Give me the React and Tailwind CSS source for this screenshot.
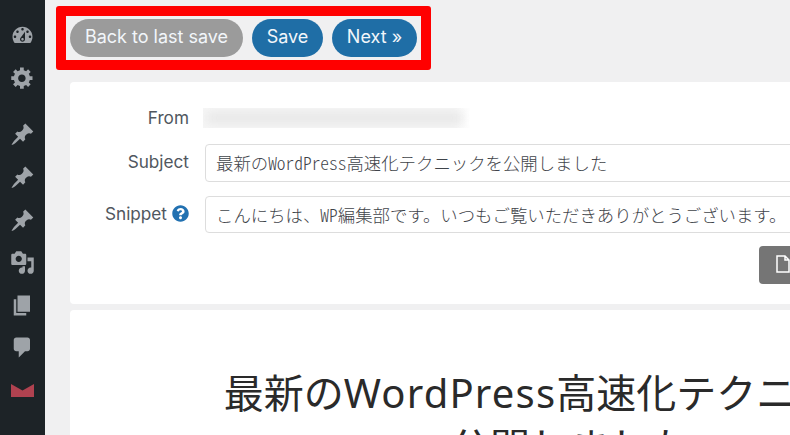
import React from "react";
import { FaQuestionCircle } from "react-icons/fa";

const icons = {
  dash: "M3.76 16h12.48c1.1-1.37 1.76-3.11 1.76-5 0-4.42-3.58-8-8-8s-8 3.58-8 8c0 1.89.66 3.63 1.76 5zM10 4c.55 0 1 .45 1 1s-.45 1-1 1-1-.45-1-1 .45-1 1-1zM6 6c.55 0 1 .45 1 1s-.45 1-1 1-1-.45-1-1 .45-1 1-1zm8 0c.55 0 1 .45 1 1s-.45 1-1 1-1-.45-1-1 .45-1 1-1zm-5.37 5.55L12 7v6c0 1.1-.9 2-2 2s-2-.9-2-2c0-.57.24-1.08.63-1.45zM4 10c.55 0 1 .45 1 1s-.45 1-1 1-1-.45-1-1 .45-1 1-1zm12 0c.55 0 1 .45 1 1s-.45 1-1 1-1-.45-1-1 .45-1 1-1zm-5 3c0-.55-.45-1-1-1s-1 .45-1 1 .45 1 1 1 1-.45 1-1z",
  gear: "M18 12h-2.18c-.17.7-.44 1.35-.81 1.93l1.54 1.54-2.1 2.1-1.54-1.54c-.58.36-1.23.63-1.91.79V19H8v-2.18c-.68-.16-1.33-.43-1.91-.79l-1.54 1.54-2.12-2.12 1.54-1.54c-.36-.58-.63-1.23-.79-1.91H1V9.03h2.17c.16-.7.44-1.35.8-1.94L2.43 5.55l2.1-2.1 1.54 1.54c.58-.37 1.24-.64 1.93-.81V2h3v2.18c.68.16 1.33.43 1.91.79l1.54-1.54 2.12 2.12-1.54 1.54c.36.59.64 1.24.8 1.94H18V12zm-8.5 1.5c1.66 0 3-1.34 3-3s-1.34-3-3-3-3 1.34-3 3 1.34 3 3 3z",
  pin: "M10.44 3.02l1.82-1.82 6.36 6.35-1.83 1.82c-1.05-.68-2.48-.57-3.41.36l-.75.75c-.92.93-1.04 2.35-.35 3.41l-1.83 1.82-2.41-2.41-2.8 2.79c-.42.42-3.38 2.71-3.8 2.29s1.86-3.39 2.28-3.81l2.79-2.79L4.1 9.36l1.83-1.82c1.05.69 2.48.57 3.4-.36l.75-.75c.93-.92 1.05-2.35.36-3.41z",
  media: "M13 11V4c0-.55-.45-1-1-1h-1.67L9 1H5L3.67 3H2c-.55 0-1 .45-1 1v7c0 .55.45 1 1 1h10c.55 0 1-.45 1-1zM7 4.5c1.38 0 2.5 1.12 2.5 2.5S8.38 9.5 7 9.5 4.5 8.38 4.5 7 5.62 4.5 7 4.5zM14 6h5v10.5c0 1.38-1.12 2.5-2.5 2.5S14 17.88 14 16.5s1.12-2.5 2.5-2.5c.17 0 .34.02.5.05V9h-3V6zm-4 8.05V13h2v3.5c0 1.38-1.12 2.5-2.5 2.5S7 17.88 7 16.5 8.12 14 9.5 14c.17 0 .34.02.5.05z",
  page: "M6 15V2h10v13H6zm-1 1h8v2H3V5h2v11z",
  comment: "M5 2h9c1.1 0 2 .9 2 2v7c0 1.1-.9 2-2 2h-2l-5 5v-5H5c-1.1 0-2-.9-2-2V4c0-1.1.9-2 2-2z",
};

function NavIcon({ d }) {
  return (
    <div className="flex h-[42.6px] items-center justify-center">
      <svg viewBox="0 0 20 20" className="h-[25px] w-[25px] fill-[#9ea3a8]">
        <path d={d} />
      </svg>
    </div>
  );
}

function Pill({ children, className }) {
  return (
    <button className={"flex h-[38px] items-center justify-center rounded-full pb-[3px] text-[18px] text-[#f2f6fa] " + className}>
      {children}
    </button>
  );
}

function FieldBox({ h, children }) {
  return (
    <div className={"flex items-center whitespace-nowrap rounded-[4px] border border-[#dddddd] bg-white pl-[10px] font-['Noto_Sans_CJK_JP',sans-serif] text-[17.4px] font-light text-[#3f444a] [font-feature-settings:'hwid'] " + h}>
      <span>{children}</span>
    </div>
  );
}

export default function App() {
  return (
    <div className="flex h-[435px] w-[790px] overflow-hidden bg-[#f0f0f1] font-['Inter',sans-serif]">
      <nav className="flex w-[45px] shrink-0 flex-col bg-[#1d2327] pt-[14px]">
        <NavIcon d={icons.dash} />
        <NavIcon d={icons.gear} />
        <div className="h-[14.5px]" />
        <NavIcon d={icons.pin} />
        <NavIcon d={icons.pin} />
        <NavIcon d={icons.pin} />
        <NavIcon d={icons.media} />
        <NavIcon d={icons.page} />
        <NavIcon d={icons.comment} />
        <div className="flex h-[42.6px] items-center justify-center">
          <svg viewBox="0 0 23 13" className="h-[13px] w-[23px] fill-[#b04250]">
            <path d="M0 0 L11.5 6.5 L23 0 V13 H0 Z" />
          </svg>
        </div>
      </nav>
      <main className="flex min-w-0 flex-1 flex-col">
        <div className="ml-[11px] mt-[6px] flex h-[64px] w-[375px] shrink-0 items-center gap-[9px] rounded-[3px] border-[10px] border-[#ff0000] px-[4px]">
          <Pill className="w-[173px] bg-[#9b9b9b]">Back to last save</Pill>
          <Pill className="w-[71px] bg-[#1f6ea6]">Save</Pill>
          <Pill className="w-[85px] bg-[#1f6ea6]">Next »</Pill>
        </div>
        <section className="ml-[25px] mt-[12px] h-[222px] w-[1000px] shrink-0 rounded-[4px] bg-white pt-[24px]">
          <div className="grid grid-cols-[119px_1fr] items-center gap-x-[16px] text-[17.2px] leading-[24px] text-[#50575e]">
            <div className="text-right">From</div>
            <div className="-ml-[2px] flex h-[20px] w-[267px] overflow-hidden bg-linear-to-r from-[#f6f6f6] via-[#f6f6f6] via-94% to-white p-[4px] pr-[8px]">
              <div className="flex-1 bg-[#e8e8e8] blur-[5px]" />
            </div>
            <div className="mt-[14px] -translate-y-[1px] text-right">Subject</div>
            <div className="mt-[14px]">
              <FieldBox h="h-[38px]">最新のWordPress高速化テクニックを公開しました</FieldBox>
            </div>
            <div className="mt-[14px] flex -translate-y-[1px] items-center justify-end gap-[5px]">
              Snippet <FaQuestionCircle className="h-[17px] w-[17px] text-[#2271b1]" />
            </div>
            <div className="mt-[14px]">
              <FieldBox h="h-[37px]">こんにちは、WP編集部です。いつもご覧いただきありがとうございます。</FieldBox>
            </div>
          </div>
          <div className="ml-[689px] mt-[13px] flex h-[38px] w-[100px] items-center rounded-[4px] bg-[#757575] pb-[3px] pl-[14px]">
            <svg viewBox="0 0 20 20" className="h-[20px] w-[20px] fill-none stroke-white stroke-[1.5]">
              <path d="M4 2 H12 L16 6 V18 H4 Z M12 2 V6 H16" />
            </svg>
          </div>
        </section>
        <section className="ml-[25px] mt-[6px] flex w-[1000px] flex-1 shrink-0 justify-center rounded-t-[4px] bg-white pt-[56px]">
          <h1 className="w-[710px] text-center font-['Noto_Sans','Noto_Sans_CJK_JP',sans-serif] text-[40px] leading-[54px] text-[#2a2a2a]">
            最新の<span className="tracking-[1.2px]">WordPress</span>高速化テクニックを公開しました
          </h1>
        </section>
      </main>
    </div>
  );
}
